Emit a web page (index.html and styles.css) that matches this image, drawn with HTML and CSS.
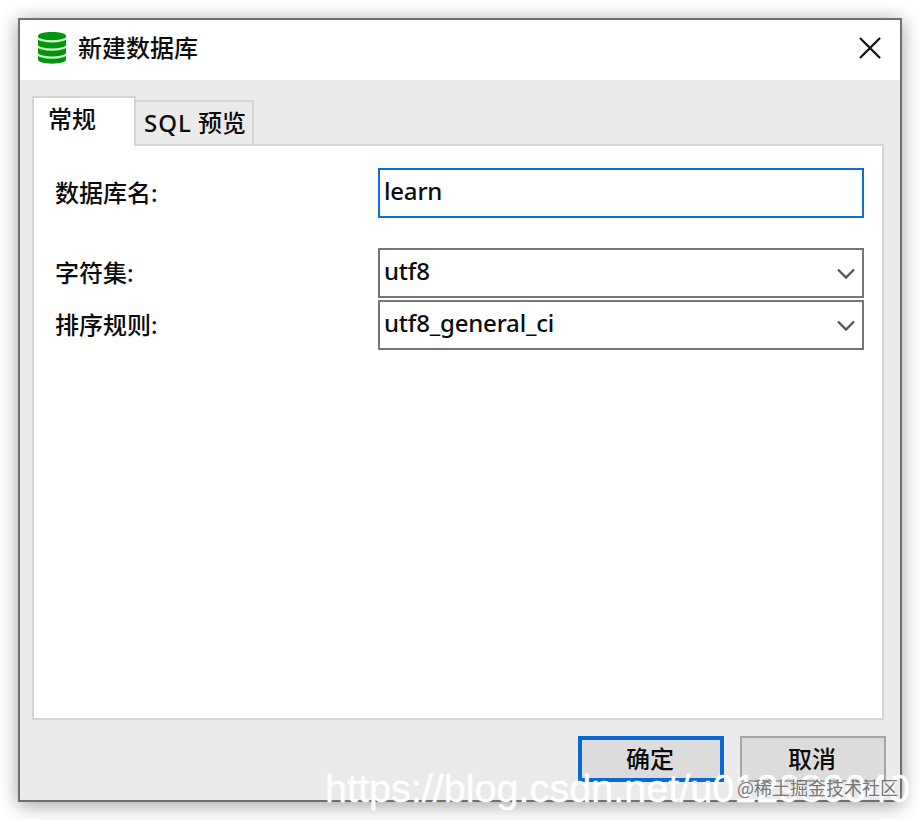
FILE: index.html
```html
<!DOCTYPE html>
<html lang="zh-CN">
<head>
<meta charset="utf-8">
<title>新建数据库</title>
<link rel="stylesheet" href="styles.css">
</head>
<body>
<main class="dialog">
  <header class="titlebar">
    <svg class="db-icon" width="30" height="34" viewBox="0 0 30 34">
      <path class="db-body" d="M1 5C1-.3 29-.3 29 5V28.500C29 34 1 34 1 28.500Z"/>
      <path class="db-line" d="M0 6.800C4 11.500 26 11.500 30 6.800M0 15C4 19.700 26 19.700 30 15M0 23C4 27.700 26 27.700 30 23"/>
    </svg>
    <h1 class="title">新建数据库</h1>
    <svg class="close" width="22" height="22" viewBox="0 0 22 22"><path d="M1 1 21 21M21 1 1 21"/></svg>
  </header>
  <nav class="tabs">
    <div class="tab active">常规</div>
    <div class="tab"><span class="sql">SQL</span> 预览</div>
  </nav>
  <section class="panel">
    <div class="row name-row"><label>数据库名:</label><div class="field focused"><span class="value">learn</span></div></div>
    <div class="row"><label>字符集:</label><div class="field"><span class="value">utf8</span><svg class="chevron" width="18" height="12" viewBox="0 0 18 12"><path d="M1 1.500 9 9.500 17 1.500"/></svg></div></div>
    <div class="row"><label>排序规则:</label><div class="field"><span class="value">utf8_general_ci</span><svg class="chevron" width="18" height="12" viewBox="0 0 18 12"><path d="M1 1.500 9 9.500 17 1.500"/></svg></div></div>
  </section>
  <footer class="actions">
    <div class="button primary">确定</div>
    <div class="button">取消</div>
  </footer>
</main>
<div class="source-mark">https://blog.csdn.net/u012930040</div>
<div class="community-mark">@稀土掘金技术社区</div>
</body>
</html>
```
FILE: styles.css
```css
* { box-sizing: border-box; }
body {
  margin: 0;
  padding: 18px;
  width: 920px;
  height: 820px;
  overflow: hidden;
  position: relative;
  background: #fff;
  color: #0c0c0c;
  font: 500 24px/32px "Noto Sans", "Noto Sans CJK SC", sans-serif;
}
.dialog {
  width: 884px;
  height: 784px;
  border: 2px solid #707070;
  background: #ebebeb;
  box-shadow: 0 3px 18px rgba(0, 0, 0, .38);
  display: flex;
  flex-direction: column;
}
.titlebar {
  height: 60px;
  background: #fff;
  display: flex;
  align-items: center;
  padding: 0 19px 4px 17px;
}
.db-body { fill: #00960a; }
.db-line { fill: none; stroke: #d4f5d4; stroke-width: 2.2; }
.title { margin: 0 auto 0 11px; font-size: 24px; font-weight: 500; }
.close { fill: none; stroke: #111; stroke-width: 2.3; }
.tabs {
  height: 66px;
  padding: 16px 0 0 12px;
  display: flex;
  align-items: flex-end;
  margin-bottom: -2px;
  position: relative;
  z-index: 1;
}
.tab {
  height: 46px;
  width: 118px;
  border: 2px solid #d5d5d5;
  border-left: 0;
  padding: 5px 0 0 8px;
  white-space: nowrap;
}
.sql { letter-spacing: 1px; }
.tab.active {
  width: 104px;
  height: 50px;
  border-left: 2px solid #d5d5d5;
  border-bottom: 0;
  background: #fff;
  padding: 5px 0 0 14px;
}
.panel {
  width: 852px;
  height: 576px;
  margin-left: 12px;
  border: 2px solid #d5d5d5;
  background: #fff;
  padding: 22px 18px 0 21px;
}
.row { display: flex; height: 50px; margin-bottom: 2px; }
.name-row { margin-bottom: 30px; }
.row label { width: 323px; padding-top: 9px; }
.field {
  width: 486px;
  height: 50px;
  border: 2px solid #767676;
  display: flex;
  justify-content: space-between;
  align-items: center;
  padding: 0 7px 3px 4px;
}
.value { padding-bottom: 2px; letter-spacing: -.2px; }
.focused { border-color: #0b6fd3; }
.chevron { fill: none; stroke: #555; stroke-width: 2.3; margin-top: 4px; }
.actions { display: flex; justify-content: flex-end; gap: 16px; padding: 16px 14px 0 0; }
.button {
  width: 146px;
  height: 46px;
  border: 2px solid #a5a5a5;
  background: #dcdcdc;
  display: flex;
  align-items: center;
  justify-content: center;
  padding-right: 2px;
}
.primary { border: 4px solid #0969d2; }
.source-mark {
  position: absolute;
  left: 325px;
  top: 766px;
  color: #fff;
  font: 39.6px/44px "Liberation Sans", sans-serif;
  -webkit-text-stroke: .4px #fff;
  white-space: nowrap;
}
.community-mark {
  position: absolute;
  left: 737px;
  top: 775px;
  color: #777;
  font: 18px/24px "Noto Sans CJK SC", sans-serif;
  white-space: nowrap;
}
```
